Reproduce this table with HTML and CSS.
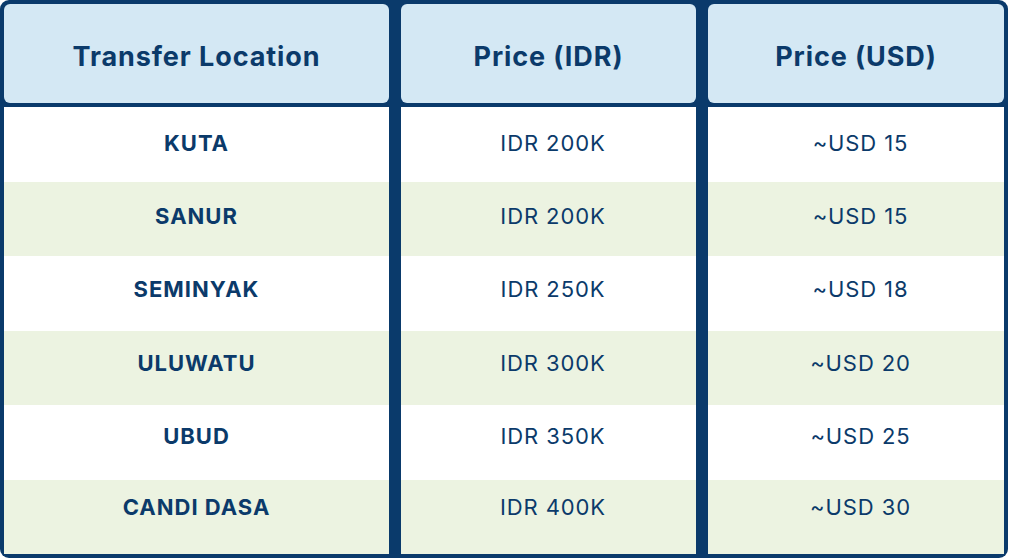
FILE: index.html
```html
<!DOCTYPE html>
<html>
<head>
<meta charset="utf-8">
<link rel="stylesheet" href="styles.css">
</head>
<body>
<div class="table">
  <div class="th">Transfer Location</div>
  <div class="th">Price (IDR)</div>
  <div class="th">Price (USD)</div>

  <div class="td loc r1">KUTA</div>
  <div class="td val r1">IDR 200K</div>
  <div class="td val r1">~USD 15</div>

  <div class="td loc alt r2">SANUR</div>
  <div class="td val alt r2">IDR 200K</div>
  <div class="td val alt r2">~USD 15</div>

  <div class="td loc r3">SEMINYAK</div>
  <div class="td val r3">IDR 250K</div>
  <div class="td val r3">~USD 18</div>

  <div class="td loc alt r4">ULUWATU</div>
  <div class="td val alt r4">IDR 300K</div>
  <div class="td val alt r4">~USD 20</div>

  <div class="td loc r5">UBUD</div>
  <div class="td val r5">IDR 350K</div>
  <div class="td val r5">~USD 25</div>

  <div class="td loc alt r6">CANDI DASA</div>
  <div class="td val alt r6">IDR 400K</div>
  <div class="td val alt r6">~USD 30</div>
</div>
</body>
</html>
```

FILE: styles.css
```css
html, body {
  margin: 0;
  padding: 0;
  background: #ffffff;
}
body {
  font-family: "Inter", "Open Sans", sans-serif;
  color: #0b3a6a;
}
.table {
  width: 1008px;
  box-sizing: border-box;
  background: #0a3a6b;
  border-radius: 9px;
  padding: 4px;
  display: grid;
  grid-template-columns: 385px 295px 296px;
  grid-template-rows: 103px repeat(6, 74.5px);
  column-gap: 12px;
  overflow: hidden;
}
.th {
  background: #d4e8f4;
  border-radius: 6px;
  margin-bottom: 4px;
  display: flex;
  align-items: center;
  justify-content: center;
  font-size: 27px;
  font-weight: 700;
  letter-spacing: 0.9px;
  padding-top: 5px;
  box-sizing: border-box;
  height: 99px;
}
.td {
  background: #ffffff;
  display: flex;
  align-items: center;
  justify-content: center;
  font-size: 22px;
  font-weight: 400;
  letter-spacing: 0.9px;
  box-sizing: border-box;
}
.td.val {
  padding-left: 9px;
}
.td.alt {
  background: #ecf3e1;
}
.td.loc {
  font-weight: 700;
  letter-spacing: 1px;
}
.r1 { padding-bottom: 2px; }
.r2 { padding-bottom: 6px; }
.r3 { padding-bottom: 8px; }
.r4 { padding-bottom: 10px; }
.r5 { padding-bottom: 13px; }
.r6 { padding-bottom: 19px; }
```
